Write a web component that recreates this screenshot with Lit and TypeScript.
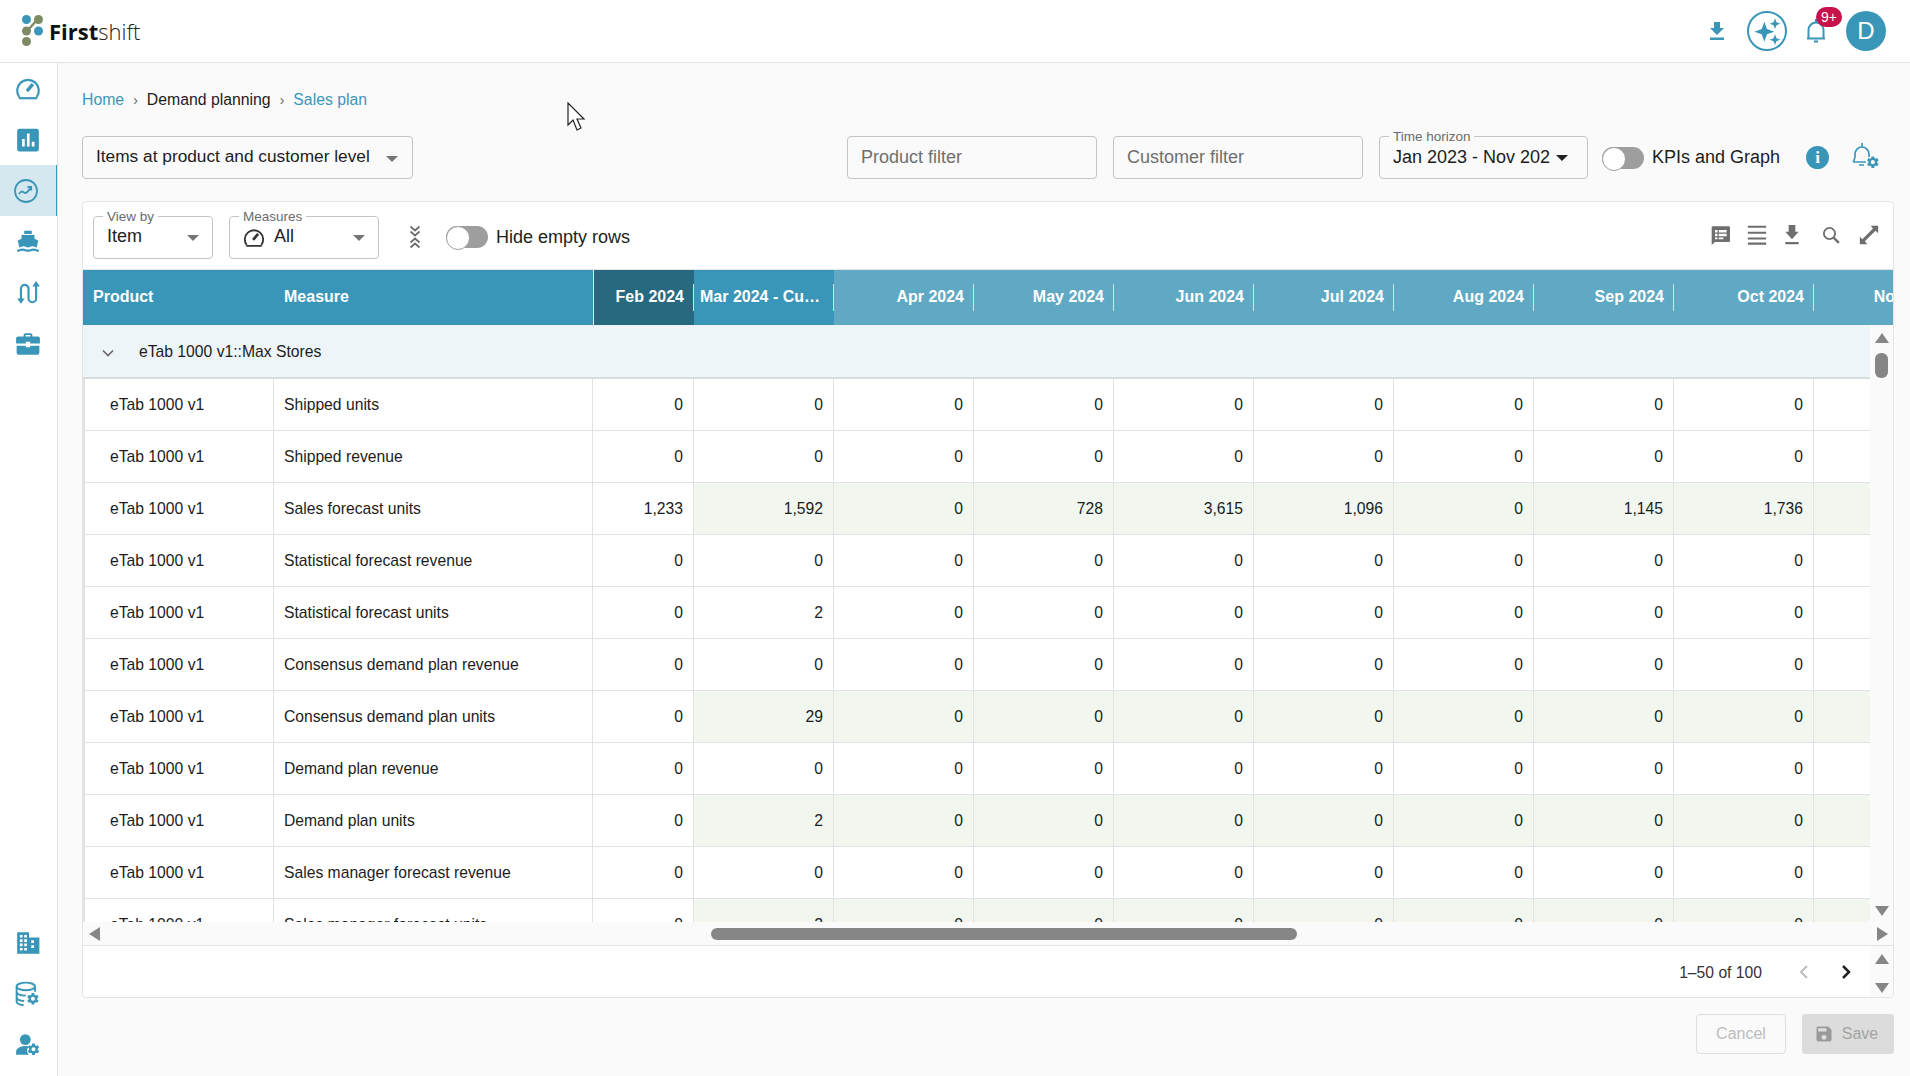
import { LitElement, html, css } from "lit";
import { customElement } from "lit/decorators.js";

const months = ["Feb 2024","Mar 2024 - Cu…","Apr 2024","May 2024","Jun 2024","Jul 2024","Aug 2024","Sep 2024","Oct 2024","Nov 2024"];
const z = ["0","0","0","0","0","0","0","0","0","0"];
type Row = { m: string; v: string[]; g?: boolean };
const rows: Row[] = [
  { m: "Shipped units", v: z },
  { m: "Shipped revenue", v: z },
  { m: "Sales forecast units", v: ["1,233","1,592","0","728","3,615","1,096","0","1,145","1,736","0"], g: true },
  { m: "Statistical forecast revenue", v: z },
  { m: "Statistical forecast units", v: ["0","2","0","0","0","0","0","0","0","0"] },
  { m: "Consensus demand plan revenue", v: z },
  { m: "Consensus demand plan units", v: ["0","29","0","0","0","0","0","0","0","0"], g: true },
  { m: "Demand plan revenue", v: z },
  { m: "Demand plan units", v: ["0","2","0","0","0","0","0","0","0","0"], g: true },
  { m: "Sales manager forecast revenue", v: z },
  { m: "Sales manager forecast units", v: ["0","2","0","0","0","0","0","0","0","0"], g: true },
];
const ic = (d: string, s = 24) => html`<svg viewBox="0 0 ${s} ${s}" fill="currentColor"><path d=${d}></path></svg>`;
const gear = "M19.4 13a7 7 0 0 0 0-2l2-1.600-2-3.400-2.400 1a7 7 0 0 0-1.700-1L15 3.500h-4l-.3 2.500a7 7 0 0 0-1.700 1l-2.400-1-2 3.400 2 1.600a7 7 0 0 0 0 2l-2 1.600 2 3.400 2.400-1a7 7 0 0 0 1.700 1l.3 2.500h4l.3-2.500a7 7 0 0 0 1.700-1l2.400 1 2-3.400zM13 15a3 3 0 1 1 0-6 3 3 0 0 1 0 6z";

@customElement("app-root")
export class AppRoot extends LitElement {
  static styles = css`
    :host { display: block; width: 1910px; height: 1076px; overflow: hidden; position: relative; background: #fafafa; color: #1c1c1c; font-family: "Liberation Sans", Arial, sans-serif; font-size: 16px; }
    * { box-sizing: border-box; }
    svg { display: block; }
    .top { height: 63px; background: #fff; border-bottom: 1px solid #e2e2e2; display: flex; align-items: center; padding: 0 24px 1px 22px; }
    .logo { display: flex; align-items: center; gap: 6px; }
    .logo svg { width: 21px; height: 31px; }
    .logo-t { font-family: "Open Sans", sans-serif; font-size: 22px; color: #222; font-weight: 300; }
    .logo-t b { font-weight: 700; color: #111; }
    .top-r { margin-left: auto; display: flex; align-items: center; color: #3a96b8; }
    .i-dl { width: 24px; height: 24px; margin-right: 18px; }
    .ai { width: 40px; height: 40px; border: 2px solid #3a96b8; border-radius: 50%; margin-right: 17px; display: flex; align-items: center; justify-content: center; }
    .ai svg { width: 32px; height: 32px; }
    .bell { position: relative; width: 24px; height: 26px; margin-right: 18px; }
    .bell svg { width: 24px; height: 26px; }
    .badge { position: absolute; left: 12px; top: -11px; width: 26px; height: 20px; border-radius: 10px; background: #c8104a; color: #fff; font-size: 14px; text-align: center; line-height: 20px; }
    .avatar { width: 40px; height: 40px; border-radius: 50%; background: #3a96b8; color: #fff; font-size: 24px; display: flex; align-items: center; justify-content: center; }
    .body { display: flex; height: 1013px; }
    .side { width: 58px; background: #fff; border-right: 1px solid #e2e2e2; display: flex; flex-direction: column; padding-bottom: 6px; color: #3a96b8; flex: none; }
    .sp { margin-top: auto; }
    .si { height: 51px; display: flex; align-items: center; justify-content: center; padding-right: 2px; }
    .si svg { width: 26px; height: 26px; }
    .si.on { background: #d6e8ef; border-right: 1px solid #3a96b8; padding-right: 4px; }
    .si.on svg { width: 24px; height: 24px; }
    .main { flex: 1; min-width: 0; padding: 0 16px 0 24px; display: flex; flex-direction: column; }
    .crumbs { height: 73px; display: flex; align-items: center; gap: 9px; font-size: 15.800px; }
    .crumbs a { color: #3a96b8; }
    .crumbs i { font-style: normal; color: #666; font-size: 14px; }
    .filters { display: flex; align-items: center; height: 43px; }
    .box { height: 43px; border: 1px solid #c4c4c4; border-radius: 4px; display: flex; align-items: center; position: relative; }
    .box.lvl { width: 331px; padding: 0 0 2px 13px; font-size: 17.300px; }
    .caret { width: 0; height: 0; border-left: 6px solid transparent; border-right: 6px solid transparent; border-top: 6px solid #757575; }
    .lvl .caret { margin-left: 16px; margin-top: 4px; }
    .f1 { margin-left: auto; width: 250px; padding-left: 13px; color: #6f6f6f; font-size: 18px; }
    .f2 { margin-left: 16px; width: 250px; padding-left: 13px; color: #6f6f6f; font-size: 18px; }
    .f3 { margin-left: 16px; width: 209px; padding-left: 13px; font-size: 18px; }
    .f3 .caret { border-top-color: #222; margin-left: 6px; }
    .lab { position: absolute; top: -7px; left: 9px; padding: 0 4px; font-size: 13.500px; line-height: 14px; color: #6b6b6b; background: #fafafa; white-space: nowrap; }
    .tg { width: 42px; height: 22px; border-radius: 11px; background: #9e9e9e; position: relative; flex: none; }
    .tg::after { content: ""; position: absolute; left: 0; top: 0; width: 22px; height: 22px; border-radius: 50%; background: #fff; border: 1px solid #9e9e9e; }
    .f4 { margin-left: 14px; }
    .tgl { margin-left: 8px; font-size: 18px; white-space: nowrap; }
    .info { margin-left: 26px; width: 23px; height: 23px; border-radius: 50%; background: #3a96b8; color: #fff; font: 700 17px "Liberation Serif", serif; display: flex; align-items: center; justify-content: center; }
    .bg { margin-left: 20px; margin-right: 13px; width: 32px; height: 32px; color: #3a96b8; margin-top: -4px; }
    .card { margin-top: 22px; height: 797px; background: #fff; border: 1px solid #e4e4e4; border-radius: 4px; display: flex; flex-direction: column; overflow: hidden; }
    .tools { height: 68px; flex: none; display: flex; align-items: center; padding: 3px 14px 0 10px; color: #6e6e6e; border-bottom: 1px solid #e4e4e4; }
    .tools .box { font-size: 18px; color: #222; background: #fff; }
    .tools .lab { background: #fff; }
    .vb { width: 120px; padding: 0 13px 2px 13px; justify-content: space-between; }
    .ms { width: 150px; margin-left: 16px; padding: 0 13px 2px 13px; }
    .ms svg { width: 22px; height: 22px; color: #333; margin-right: 9px; margin-top: 3px; }
    .ms .caret { margin-left: auto; }
    .vb .caret, .ms .caret { margin-top: 4px; }
    .coll { margin-left: 29px; width: 14px; height: 24px; margin-right: 24px; }
    .coll svg { width: 14px; height: 24px; }
    .hide { margin-left: 8px; font-size: 18px; color: #222; }
    .tr { margin-left: auto; display: flex; align-items: center; margin-top: -4px; }
    .tr svg { width: 20px; height: 20px; }
    .t2 { margin-left: 17px; }
    .t3 { margin-left: 15px; }
    .t4 { margin-left: 20px; }
    .t4s { width: 18px !important; height: 18px !important; }
    .t5 { margin-left: 19px; }
    .thead { height: 55px; flex: none; display: flex; background: #5fa9c5; color: #fff; font-weight: 700; font-size: 16px; overflow: hidden; }
    .th { flex: none; display: flex; align-items: center; justify-content: flex-end; padding: 0 10px 2px 6px; position: relative; white-space: nowrap; }
    .th::after { content: ""; position: absolute; right: 0; top: 14px; bottom: 14px; width: 1px; background: #cfe3ec; }
    .th.l { justify-content: flex-start; background: #3a96b8; padding-left: 10px; }
    .th.l::after { display: none; }
    .c1 { width: 191px; }
    .c2 { width: 319px; }
    .cm { width: 140px; }
    .th.dark { width: 101px; background: #27697f; border-left: 1px solid #dcebf0; }
    .th.cur { background: #3a96b8; justify-content: flex-start; padding-left: 6px; }
    .vwrap { flex: none; height: 597px; display: flex; }
    .vclip { flex: 1; min-width: 0; overflow: hidden; }
    .group { height: 54px; background: #edf5f8; border-bottom: 2px solid #d8dcdd; display: flex; align-items: center; padding: 1px 0 0 18px; font-size: 15.700px; }
    .group svg { width: 14px; height: 14px; color: #666; margin-right: 24px; margin-top: 2px; }
    .row { height: 52px; display: flex; font-size: 15.700px; border-bottom: 1px solid #e2e2e2; border-left: 2px solid #e2e2e2; }
    .td { flex: none; display: flex; align-items: center; border-right: 1px solid #e2e2e2; padding: 0 10px; white-space: nowrap; }
    .td.a { width: 189px; padding-left: 25px; }
    .td.b { width: 319px; padding-left: 10px; }
    .td.n { justify-content: flex-end; width: 140px; }
    .td.n.f { width: 101px; }
    .td.g { background: #f1f7ef; }
    .vbar { width: 23px; flex: none; background: #fafafa; display: flex; flex-direction: column; align-items: center; padding-top: 8px; }
    .up { width: 0; height: 0; border-left: 7px solid transparent; border-right: 7px solid transparent; border-bottom: 10px solid #868686; }
    .dn { width: 0; height: 0; border-left: 7px solid transparent; border-right: 7px solid transparent; border-top: 10px solid #868686; }
    .vth { width: 13px; height: 25px; border-radius: 6px; background: #868686; margin-top: 10px; }
    .vbar .dn { margin-top: auto; margin-bottom: 6px; }
    .hbar { height: 24px; flex: none; background: #fafafa; border-bottom: 1px solid #e2e2e2; display: flex; align-items: center; padding: 0 0 0 6px; }
    .lf { width: 0; height: 0; border-top: 7px solid transparent; border-bottom: 7px solid transparent; border-right: 11px solid #868686; }
    .rt { width: 0; height: 0; border-top: 7px solid transparent; border-bottom: 7px solid transparent; border-left: 11px solid #868686; margin-right: 5px; }
    .hth { width: 586px; height: 12px; border-radius: 6px; background: #868686; margin-left: 611px; margin-right: auto; }
    .pg { flex: 1; display: flex; align-items: center; justify-content: flex-end; font-size: 15.700px; color: #333; }
    .pg span { padding-top: 2px; }
    .pg svg { width: 24px; height: 24px; }
    .pgb { margin-left: 30px; color: #bdbdbd; padding-top: 1px; }
    .pgn { margin-left: 18px; color: #222; margin-right: 11px; padding-top: 1px; }
    .pbar { width: 23px; margin-left: 1px; align-self: stretch; background: #fafafa; display: flex; flex-direction: column; align-items: center; justify-content: space-between; padding: 8px 0 4px; }
    .acts { display: flex; justify-content: flex-end; margin-top: 16px; gap: 16px; }
    .btn { height: 40px; border-radius: 4px; display: flex; align-items: center; justify-content: center; font-size: 16px; color: #bdbdbd; }
    .cancel { width: 90px; border: 1px solid #dedede; }
    .save { width: 92px; background: #dcdcdc; color: #a3a3a3; gap: 8px; padding-right: 4px; }
    .save svg { width: 20px; height: 20px; color: #9a9a9a; }
    .cursor { position: absolute; left: 566px; top: 102px; width: 22px; height: 30px; }
  `;
  render() {
    return html`
      <div class="top">
        <div class="logo">
          <svg viewBox="0 0 21 31">
            <path d="M5 16 L16 4" stroke="#7d8a62" stroke-width="2.500"></path>
            <circle cx="4.500" cy="4.500" r="4.500" fill="#3a96b8"></circle>
            <circle cx="16.500" cy="4.500" r="4.500" fill="#7d8a62"></circle>
            <circle cx="4.500" cy="16" r="4.500" fill="#7d8a62"></circle>
            <circle cx="16.500" cy="16" r="4.500" fill="#3a96b8"></circle>
            <circle cx="4.500" cy="26.500" r="4.500" fill="#7d8a62"></circle>
          </svg>
          <div class="logo-t"><b>First</b>shift</div>
        </div>
        <div class="top-r">
          <div class="i-dl">${ic("M19 9h-4V3H9v6H5l7 7zM5 18.500v2.500h14v-2.500z")}</div>
          <div class="ai">${ic("M10 5l2 5.500 5.500 2-5.500 2L10 20l-2-5.500-5.500-2 5.500-2zM18 2.500l1.100 2.900L22 6.500l-2.900 1.100L18 10.500l-1.100-2.900L14 6.500l2.900-1.100zM18 14.500l1.100 2.900 2.900 1.100-2.900 1.100-1.100 2.900-1.100-2.900-2.900-1.100 2.900-1.100z")}</div>
          <div class="bell">
            <svg viewBox="0 0 24 26" fill="none" stroke="currentColor" stroke-width="2"><path d="M4.500 20V12a7.500 7.500 0 0 1 15 0v8M3 20.500h18"></path><path d="M12 1v3M10 23.500h4"></path></svg>
            <div class="badge">9+</div>
          </div>
          <div class="avatar">D</div>
        </div>
      </div>
      <div class="body">
        <div class="side">
          <div class="si">
            <svg viewBox="0 0 24 24" fill="none" stroke="currentColor" stroke-width="2"><path d="M4 19.500A10 10 0 1 1 20 19.500"></path><path d="M3.500 20.500h17" ></path><path d="M11 14L16.500 7.500" stroke-width="3"></path></svg>
          </div>
          <div class="si">${ic("M4 1.500h16a2 2 0 0 1 2 2v17a2 2 0 0 1-2 2H4a2 2 0 0 1-2-2v-17a2 2 0 0 1 2-2zM6.500 11v7h2.500v-7zM11 6v12h2.500V6zM15.500 13.500V18H18v-4.500z")}</div>
          <div class="si on">
            <svg viewBox="0 0 24 24" fill="none" stroke="currentColor" stroke-width="1.800"><circle cx="12" cy="12" r="11"></circle><path d="M5 15c2-3 3-3 5-1.500s3 0 7-5M13.500 8h3.700v3.500"></path></svg>
          </div>
          <div class="si">${ic("M8.500 1.500h7v3h-7zM6 5.500h12v3.500l3.500 1.500-1.500 6.500c-1.500 0-2.500-1-4-1s-2.500 1-4 1-2.500-1-4-1-2.500 1-4 1l-1.500-6.500L6 9zM2 19c2.500 0 2.500-1 5-1s2.500 1 5 1 2.500-1 5-1 2.500 1 5 1v2c-2.500 0-2.500-1-5-1s-2.500 1-5 1-2.500-1-5-1-2.500 1-5 1z")}</div>
          <div class="si">
            <svg viewBox="0 0 24 24" fill="none" stroke="currentColor" stroke-width="2"><path d="M5.500 18V8a3.500 3.500 0 0 1 7 0v9a3.500 3.500 0 0 0 7 0V4"></path><path d="M2 17l3.500 5 3.500-5z M16 6l3.500-5 3.500 5z" fill="currentColor" stroke="none"></path></svg>
          </div>
          <div class="si">${ic("M8 5V3.500A1.500 1.500 0 0 1 9.500 2h5A1.500 1.500 0 0 1 16 3.500V5h5a2 2 0 0 1 2 2v4.500h-9V10h-4v1.500H1V7a2 2 0 0 1 2-2zM9.800 5h4.400V3.800H9.800zM1.500 13.500H10V15h4v-1.500h8.500V20a2 2 0 0 1-2 2h-17a2 2 0 0 1-2-2z")}</div>
          <div class="si sp">${ic("M2 2h11v5h9.500v15H2zM4.500 4.500v2.500H7V4.500zM8.500 4.500v2.500H11V4.500zM4.500 8.500V11H7V8.500zM8.500 8.500V11H11V8.500zM4.500 12.500V15H7v-2.500zM8.500 12.500V15H11v-2.500zM4.500 16.500V19H7v-2.500zM8.500 16.500V19H11v-2.500zM15 9.500V12h2.500V9.500zM15 14v2.500h2.500V14z")}</div>
          <div class="si">
            <svg viewBox="0 0 24 24" fill="none" stroke="currentColor" stroke-width="1.800"><ellipse cx="10" cy="5" rx="8.500" ry="3.500"></ellipse><path d="M1.500 5v14c0 1.700 3 3 6.500 3.300M1.500 10c0 2 3.500 3.500 8.500 3.500M1.500 15c0 1.800 3 3.200 7 3.400M18.500 5v5"></path><g transform="translate(8.500 9) scale(.62)"><path d=${gear} fill="currentColor" stroke="none"></path></g></svg>
          </div>
          <div class="si">
            <svg viewBox="0 0 24 24" fill="currentColor"><circle cx="9.500" cy="7" r="5"></circle><path d="M1 21v-2.500c0-3.500 4-5.500 8.500-5.500 1 0 2 .1 3 .3a7 7 0 0 0 0 7.700z"></path><g transform="translate(9 8.500) scale(.62)"><path d=${gear}></path></g></svg>
          </div>
        </div>
        <div class="main">
          <div class="crumbs"><a>Home</a><i>›</i><span>Demand planning</span><i>›</i><a>Sales plan</a></div>
          <div class="filters">
            <div class="box lvl">Items at product and customer level<div class="caret"></div></div>
            <div class="box f1">Product filter</div>
            <div class="box f2">Customer filter</div>
            <div class="box f3"><div class="lab">Time horizon</div>Jan 2023 - Nov 202<div class="caret"></div></div>
            <div class="tg f4"></div>
            <div class="tgl">KPIs and Graph</div>
            <div class="info">i</div>
            <div class="bg">
              <svg viewBox="0 0 32 32" fill="none" stroke="currentColor" stroke-width="1.700"><path d="M4 22c2-2 2-4 2-8a7 7 0 0 1 14 0v3M4 22h13M13 3v4M10 25h5"></path><g transform="translate(15 14) scale(.68)"><path d=${gear} fill="currentColor" stroke="none"></path></g></svg>
            </div>
          </div>
          <div class="card">
            <div class="tools">
              <div class="box vb"><div class="lab">View by</div>Item<div class="caret"></div></div>
              <div class="box ms"><div class="lab">Measures</div>
                <svg viewBox="0 0 24 24" fill="none" stroke="currentColor" stroke-width="2"><path d="M4 19.500A10 10 0 1 1 20 19.500"></path><path d="M3.500 20.500h17"></path><path d="M11 14L16.500 7.500" stroke-width="3"></path></svg>
                All<div class="caret"></div></div>
              <div class="coll"><svg viewBox="0 0 14 24" fill="none" stroke="#6e6e6e" stroke-width="1.800"><path d="M2.500 1.500l4.500 4 4.500-4M2.500 6.500l4.500 4 4.500-4M2.500 22.500l4.500-4 4.500 4M2.500 17.500l4.500-4 4.500 4"></path></svg></div>
              <div class="tg"></div>
              <div class="hide">Hide empty rows</div>
              <div class="tr">
                ${ic("M3.500 1.500h19a1.500 1.500 0 0 1 1.500 1.500v16a1.500 1.500 0 0 1-1.500 1.500H6L2 24V3a1.500 1.500 0 0 1 1.500-1.500zM6 6v3h3V6zM10.500 6v3H20V6zM6 10.500v3h3v-3zM10.500 10.500v3H20v-3zM6 15v2h3v-2zM10.500 15v2H16v-2z")}
                <svg class="t2" viewBox="0 0 24 24" fill="currentColor"><path d="M1 1h22v2.400H1zM1 8h22v2.400H1zM1 15h22v2.400H1zM1 21h22v2.800H1z"></path></svg>
                <svg class="t3" viewBox="0 0 24 24" fill="currentColor"><path d="M16 8h4l-8 9-8-9h4V0h8zM4 20.500h16V23H4z"></path></svg>
                <svg class="t4 t4s" viewBox="0 0 24 24" fill="none" stroke="currentColor" stroke-width="2.400"><circle cx="10" cy="10" r="7.500"></circle><path d="M15.500 15.500l7 7" stroke-width="3"></path></svg>
                <svg class="t5" viewBox="0 0 24 24" fill="currentColor"><path d="M14 1h9v9l-3.200-3.200L7 19.600l3 3.400H1v-9l3 3L16.800 4.200z"></path></svg>
              </div>
            </div>
            <div class="thead">
              <div class="th l c1">Product</div>
              <div class="th l c2">Measure</div>
              ${months.map((m, i) => html`<div class="th cm ${i === 0 ? "dark" : i === 1 ? "cur" : ""}">${m}</div>`)}
            </div>
            <div class="vwrap">
              <div class="vclip">
                <div class="group">
                  <svg viewBox="0 0 14 14" fill="none" stroke="currentColor" stroke-width="1.600"><path d="M2 4.500l5 5 5-5"></path></svg>
                  eTab 1000 v1::Max Stores
                </div>
                ${rows.map((r) => html`<div class="row">
                  <div class="td a">eTab 1000 v1</div>
                  <div class="td b">${r.m}</div>
                  ${r.v.map((v, i) => html`<div class="td n ${i === 0 ? "f" : ""} ${r.g && i > 0 ? "g" : ""}">${v}</div>`)}
                </div>`)}
              </div>
              <div class="vbar"><div class="up"></div><div class="vth"></div><div class="dn"></div></div>
            </div>
            <div class="hbar"><div class="lf"></div><div class="hth"></div><div class="rt"></div></div>
            <div class="pg">
              <span>1–50 of 100</span>
              <div class="pgb"><svg viewBox="0 0 24 24" fill="none" stroke="currentColor" stroke-width="2"><path d="M15 6l-6 6 6 6"></path></svg></div>
              <div class="pgn"><svg viewBox="0 0 24 24" fill="none" stroke="currentColor" stroke-width="2.500"><path d="M9 6l6 6-6 6"></path></svg></div>
              <div class="pbar"><div class="up"></div><div class="dn"></div></div>
            </div>
          </div>
          <div class="acts">
            <div class="btn cancel">Cancel</div>
            <div class="btn save">${ic("M17 3H5a2 2 0 0 0-2 2v14a2 2 0 0 0 2 2h14a2 2 0 0 0 2-2V7zM12 19a3 3 0 1 1 0-6 3 3 0 0 1 0 6zM15 9H5V5h10z")}Save</div>
          </div>
        </div>
      </div>
      <svg class="cursor" viewBox="0 0 22 30"><path d="M2 1v22l5-5 4 10 4-2-4-9h7z" fill="#fff" stroke="#222" stroke-width="1.200"></path></svg>
    `;
  }
}
